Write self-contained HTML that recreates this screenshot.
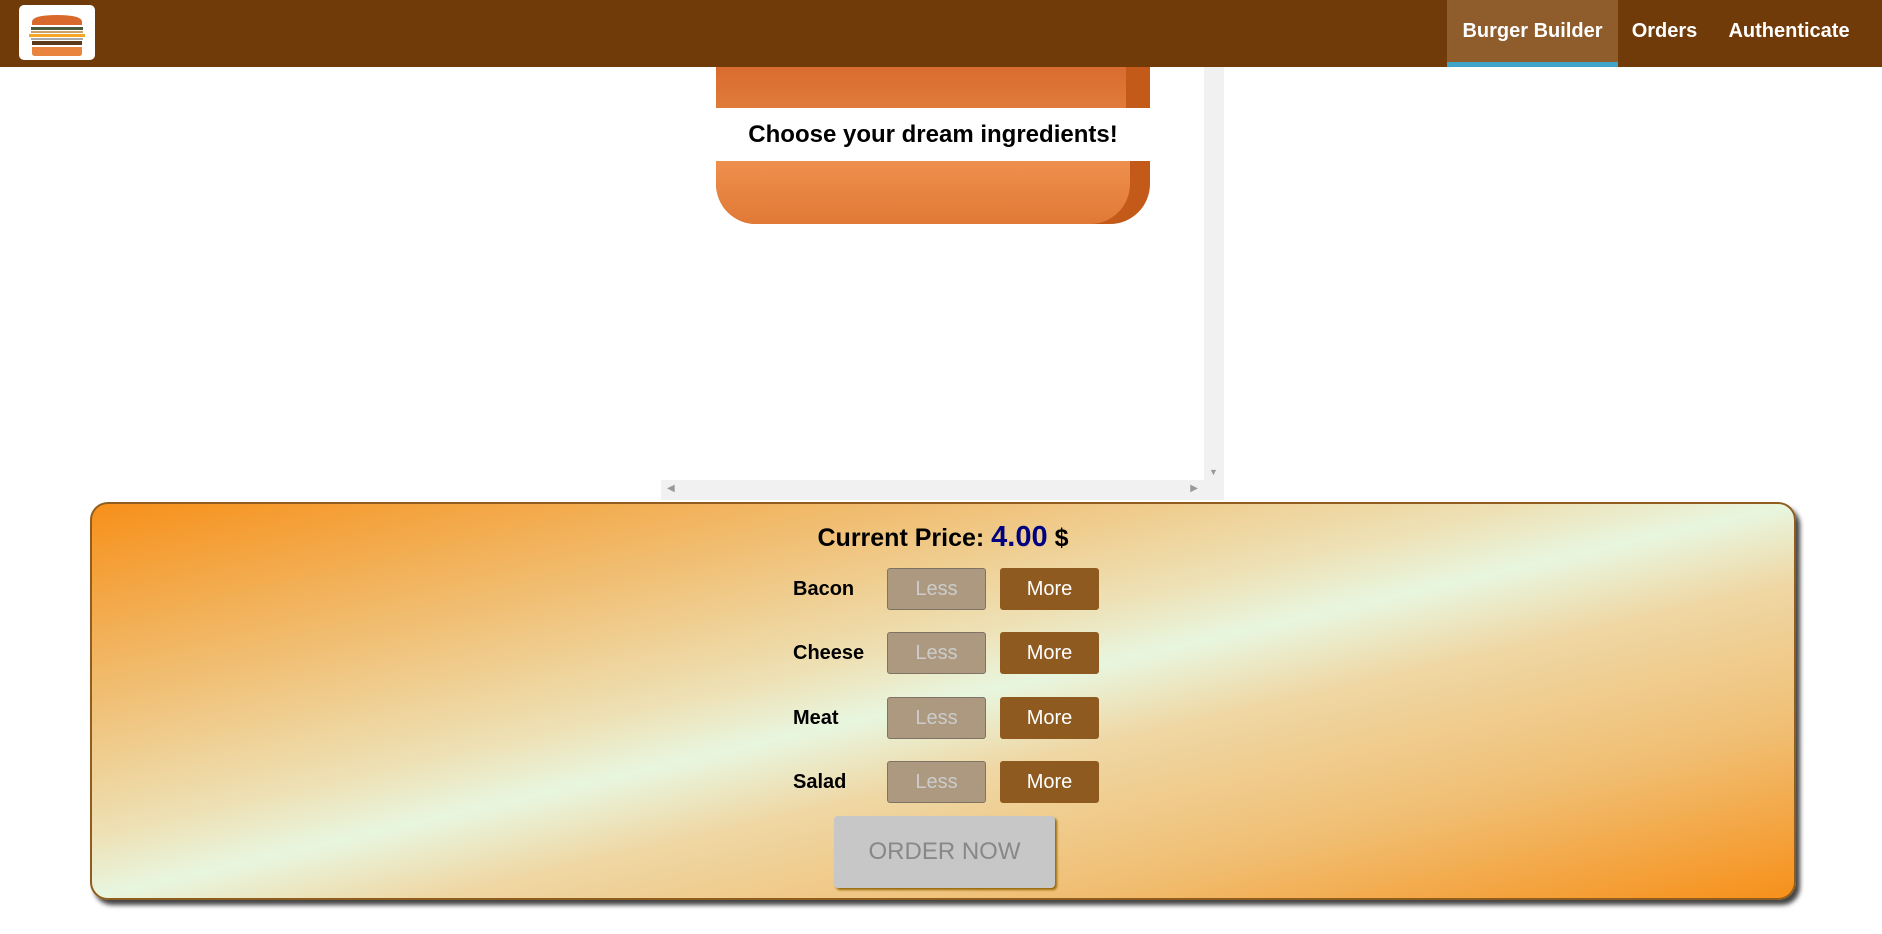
<!DOCTYPE html>
<html><head><meta charset="utf-8"><style>
*{box-sizing:border-box;margin:0;padding:0}
body{width:1882px;height:934px;background:#fff;font-family:"Liberation Sans",sans-serif;position:relative;overflow:hidden}
.tb{position:absolute;left:0;top:0;width:1882px;height:67px;background:#703b09;z-index:5}
.logo{position:absolute;left:19px;top:5px;width:76px;height:55px;background:#fff;border-radius:5px}
.nav a{position:absolute;top:0;height:67px;line-height:62px;color:#fff;font-weight:bold;font-size:20px;text-align:center}
.scr{position:absolute;left:661px;top:40px;width:563px;height:460px;background:#fff}
.vs{position:absolute;left:1204px;top:67px;width:20px;height:413px;background:#f1f1f1}
.hs{position:absolute;left:661px;top:480px;width:563px;height:20px;background:#f1f1f1}
.bc{position:absolute;left:90px;top:502px;width:1706px;height:398px;border:2px solid #8f5e1e;border-radius:18px;
background:linear-gradient(to bottom right,#f7901a 0%,#f0bf74 25%,#eee0b4 42%,#e8f6df 50%,#efd7a4 60%,#f0bf74 78%,#f7901a 100%);
box-shadow:4px 5px 5px #444}
.lbl{position:absolute;left:793px;font-weight:bold;font-size:20px;color:#000}
.btn{position:absolute;width:99px;height:42px;font-size:20px;line-height:40px;text-align:center;border-radius:3px}
.less{left:887px;background:#ac9980;border:1px solid #7e7365;color:#ccc}
.more{left:1000px;background:#8f5a1f;border:1px solid #8f5a1f;color:#fff}
</style></head><body>
<div class="tb">
 <div class="logo">
  <svg width="76" height="55" viewBox="0 0 76 55">
   <path d="M13 17 Q13 10 38 10 Q63 10 63 17 L63 20 L13 20Z" fill="#d9682c"/>
   <rect x="12" y="22" width="52" height="3" fill="#4a5a3a"/>
   <rect x="12" y="26" width="52" height="2" fill="#c7a06a"/>
   <rect x="10" y="29" width="56" height="3" fill="#f5a623"/>
   <rect x="12" y="33" width="52" height="2" fill="#aaa"/>
   <rect x="13" y="36" width="50" height="4" fill="#5a3a1a"/>
   <path d="M13 42 L63 42 L63 48 Q63 51 60 51 L16 51 Q13 51 13 48Z" fill="#e8843e"/>
  </svg>
 </div>
 <div class="nav">
  <a style="left:1447px;width:171px;background:#8f5c2c;border-bottom:5px solid #40a4c8">Burger Builder</a>
  <a style="left:1630px;width:69px">Orders</a>
  <a style="left:1723px;width:132px">Authenticate</a>
 </div>
</div>
<div class="scr">
 <div style="position:absolute;left:55px;top:0;width:434px;height:68px;background:linear-gradient(#d4622a,#e07b3a)"></div>
 <div style="position:absolute;left:465px;top:0;width:24px;height:68px;background:#c45a1a"></div>
 <div style="position:absolute;left:55px;top:68px;width:434px;height:53px;text-align:center;line-height:53px;font-weight:bold;font-size:24px;color:#000">Choose your dream ingredients!</div>
 <div style="position:absolute;left:55px;top:121px;width:434px;height:63px;background:#c45a1a;border-radius:0 0 40px 40px"></div>
 <div style="position:absolute;left:55px;top:121px;width:414px;height:63px;background:linear-gradient(#ef8f4e,#e07936);border-radius:0 0 40px 40px"></div>
</div>
<div class="vs"><div style="position:absolute;left:5px;bottom:3px;font-size:9px;color:#999">▼</div></div>
<div class="hs"><div style="position:absolute;left:6px;top:3px;font-size:10px;color:#999">◀</div><div style="position:absolute;right:26px;top:3px;font-size:10px;color:#999">▶</div></div>
<div class="bc"></div>
<div style="position:absolute;left:90px;width:1706px;top:521px;text-align:center;font-weight:bold;font-size:25px;color:#000">Current Price: <span style="color:#000080;font-size:29px">4.00</span> $</div>
<div class="lbl" style="top:578px">Bacon</div>
<div class="btn less" style="top:568px">Less</div><div class="btn more" style="top:568px">More</div>
<div class="lbl" style="top:642px">Cheese</div>
<div class="btn less" style="top:632px">Less</div><div class="btn more" style="top:632px">More</div>
<div class="lbl" style="top:707px">Meat</div>
<div class="btn less" style="top:697px">Less</div><div class="btn more" style="top:697px">More</div>
<div class="lbl" style="top:771px">Salad</div>
<div class="btn less" style="top:761px">Less</div><div class="btn more" style="top:761px">More</div>
<div style="position:absolute;left:834px;top:816px;width:221px;height:72px;background:#c7c7c7;color:#888;font-size:24px;line-height:72px;text-align:center;border-radius:4px;box-shadow:2px 2px 2px #966909">ORDER NOW</div>
</body></html>
